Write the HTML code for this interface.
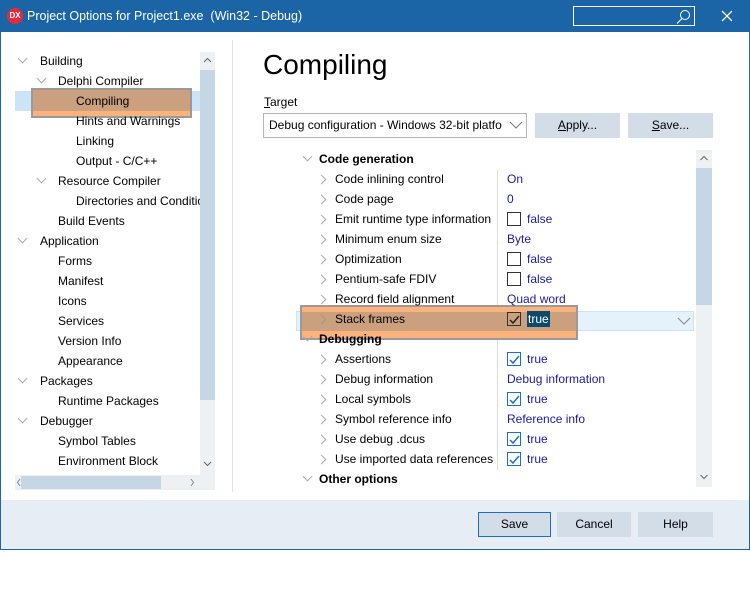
<!DOCTYPE html>
<html><head><style>
*{margin:0;padding:0;box-sizing:border-box}
body{width:750px;height:550px;position:relative;overflow:hidden;font-family:"Liberation Sans",sans-serif;font-size:12px;color:#000;background:#fff}
.a{position:absolute;white-space:nowrap}
.t{position:absolute;white-space:nowrap;line-height:20px;height:20px;top:1px}
.v{color:#1a1aa0}
.cb{position:absolute;width:14px;height:14px;border:1px solid #333;background:#fff}
.cb.on{border-color:#1a6fc9}
.btn{position:absolute;background:#d3dde8;text-align:center;line-height:25px;height:25px}
.d,.r{position:absolute;width:7px;height:7px;border-right:1px solid #aaa;border-bottom:1px solid #aaa}
.d{transform:rotate(45deg)}
.r{transform:rotate(-45deg)}
</style></head><body>
<div class="a" style="left:0;top:0;width:750px;height:32px;background:#1b64a5"></div>
<div class="a" style="left:7px;top:8px;width:16px;height:16px;border-radius:50%;background:#e52b3b;color:#fff;font-size:8px;font-weight:bold;line-height:16px;text-align:center">DX</div>
<div class="a" style="left:27px;top:9px;color:#fff;font-size:12.5px">Project Options for Project1.exe &nbsp;(Win32 - Debug)</div>
<div class="a" style="left:573px;top:6px;width:122px;height:20px;border:1px solid #fff"></div>
<svg class="a" style="left:676px;top:9px" width="16" height="16"><circle cx="9" cy="6" r="4.5" fill="none" stroke="#fff"/><line x1="6" y1="9.5" x2="1" y2="14.5" stroke="#fff"/></svg>
<svg class="a" style="left:721px;top:10px" width="12" height="12"><path d="M1 1L11 11M11 1L1 11" stroke="#fff" stroke-width="1.3"/></svg>
<div class="a" style="left:0;top:32px;width:1px;height:518px;background:#1b64a5"></div>
<div class="a" style="left:749px;top:32px;width:1px;height:518px;background:#1b64a5"></div>
<div class="a" style="left:0;top:549px;width:750px;height:1px;background:#1b64a5"></div>
<div class="a" style="left:1px;top:500px;width:748px;height:49px;background:#e6edf4"></div>
<div class="a" style="left:232px;top:40px;width:1px;height:452px;background:#e3e3e3"></div>
<!-- tree -->
<div class="a" style="left:15px;top:91px;width:185px;height:20px;background:#cce4f7"></div>
<div class="a" style="left:31px;top:88px;width:161px;height:30px;background:#fcb27c;border:2px solid #9a9a9a"></div>
<div class="a" style="left:33px;top:90px;width:157px;height:21px;background:#caa07e"></div>
<div class="a" style="left:200px;top:52px;width:15px;height:423px;background:#eef1f4"></div>
<div class="a" style="left:200px;top:70px;width:15px;height:330px;background:#c5d6e5"></div>
<div class="a" style="left:15px;top:475px;width:200px;height:15px;background:#eef1f4"></div>
<div class="a" style="left:21px;top:476px;width:140px;height:13px;background:#c5d6e5"></div>
<svg class="a" style="left:200px;top:52px" width="15" height="423"><g fill="none" stroke="#666"><path d="M4 10l3.5-3.5 3.5 3.5"/><path d="M4 410l3.5 3.5 3.5-3.5"/></g></svg>
<svg class="a" style="left:15px;top:475px" width="200" height="15"><g fill="none" stroke="#888"><path d="M5 4l-2.5 3.5 2.5 3.5"/><path d="M176 4l2.5 3.5-2.5 3.5"/></g></svg>
<div style="position:absolute;left:0;top:51px">
<div class="d" style="left:19px;top:4px"></div><div class="t" style="left:40px;top:0">Building</div>
<div class="d" style="left:38px;top:24px"></div><div class="t" style="left:58px;top:20px">Delphi Compiler</div>
<div class="t" style="left:76px;top:40px">Compiling</div>
<div class="t" style="left:76px;top:60px">Hints and Warnings</div>
<div class="t" style="left:76px;top:80px">Linking</div>
<div class="t" style="left:76px;top:100px">Output - C/C++</div>
<div class="d" style="left:38px;top:124px"></div><div class="t" style="left:58px;top:120px">Resource Compiler</div>
<div class="t" style="left:76px;top:140px;width:124px;overflow:hidden">Directories and Conditionals</div>
<div class="t" style="left:58px;top:160px">Build Events</div>
<div class="d" style="left:19px;top:184px"></div><div class="t" style="left:40px;top:180px">Application</div>
<div class="t" style="left:58px;top:200px">Forms</div>
<div class="t" style="left:58px;top:220px">Manifest</div>
<div class="t" style="left:58px;top:240px">Icons</div>
<div class="t" style="left:58px;top:260px">Services</div>
<div class="t" style="left:58px;top:280px">Version Info</div>
<div class="t" style="left:58px;top:300px">Appearance</div>
<div class="d" style="left:19px;top:324px"></div><div class="t" style="left:40px;top:320px">Packages</div>
<div class="t" style="left:58px;top:340px">Runtime Packages</div>
<div class="d" style="left:19px;top:364px"></div><div class="t" style="left:40px;top:360px">Debugger</div>
<div class="t" style="left:58px;top:380px">Symbol Tables</div>
<div class="t" style="left:58px;top:400px">Environment Block</div>
</div>
<!-- right -->
<div class="a" style="left:263px;top:49px;font-size:28px">Compiling</div>
<div class="a" style="left:264px;top:95px"><u>T</u>arget</div>
<div class="a" style="left:263px;top:113px;width:264px;height:25px;border:1px solid #b5b5b5;line-height:23px;padding-left:5px;overflow:hidden">Debug configuration - Windows 32-bit platfo</div>
<svg class="a" style="left:509px;top:120px" width="14" height="10"><path d="M1 2l6 6 6-6" fill="none" stroke="#777"/></svg>
<div class="btn" style="left:535px;top:113px;width:85px"><u>A</u>pply...</div>
<div class="btn" style="left:628px;top:113px;width:85px"><u>S</u>ave...</div>
<div class="a" style="left:696px;top:150px;width:16px;height:337px;background:#eef1f4"></div>
<div class="a" style="left:696px;top:168px;width:16px;height:137px;background:#c5d6e5"></div>
<svg class="a" style="left:696px;top:150px" width="16" height="337"><g fill="none" stroke="#666"><path d="M4.5 10l3.5-3.5 3.5 3.5"/><path d="M4.5 325l3.5 3.5 3.5-3.5"/></g></svg>
<div class="a" style="left:497px;top:170px;width:1px;height:300px;background:#ddd"></div>
<div class="a" style="left:296px;top:311px;width:398px;height:20px;background:#e5f1fb;border:1px solid #cce4f7"></div>
<div class="a" style="left:300px;top:305px;width:278px;height:35px;background:#fcb27c;border:2px solid #9a9a9a"></div>
<div class="a" style="left:302px;top:312px;width:274px;height:19px;background:#caa07e"></div>
<svg class="a" style="left:677px;top:316px" width="14" height="10"><path d="M1 2l6 6 6-6" fill="none" stroke="#888"/></svg>
<div style="position:absolute;left:0;top:149px">
<div class="d" style="left:304px;top:4px"></div><div class="t" style="left:319px;top:0;font-weight:bold">Code generation</div>
<div class="r" style="left:318px;top:27px"></div><div class="t" style="left:335px;top:20px">Code inlining control</div><div class="t v" style="left:507px;top:20px">On</div>
<div class="r" style="left:318px;top:47px"></div><div class="t" style="left:335px;top:40px">Code page</div><div class="t v" style="left:507px;top:40px">0</div>
<div class="r" style="left:318px;top:67px"></div><div class="t" style="left:335px;top:60px">Emit runtime type information</div><div class="cb" style="left:507px;top:63px"></div><div class="t v" style="left:527px;top:60px">false</div>
<div class="r" style="left:318px;top:87px"></div><div class="t" style="left:335px;top:80px">Minimum enum size</div><div class="t v" style="left:507px;top:80px">Byte</div>
<div class="r" style="left:318px;top:107px"></div><div class="t" style="left:335px;top:100px">Optimization</div><div class="cb" style="left:507px;top:103px"></div><div class="t v" style="left:527px;top:100px">false</div>
<div class="r" style="left:318px;top:127px"></div><div class="t" style="left:335px;top:120px">Pentium-safe FDIV</div><div class="cb" style="left:507px;top:123px"></div><div class="t v" style="left:527px;top:120px">false</div>
<div class="r" style="left:318px;top:147px"></div><div class="t" style="left:335px;top:140px">Record field alignment</div><div class="t v" style="left:507px;top:140px">Quad word</div>
<div class="r" style="left:318px;top:167px;border-color:#999"></div><div class="t" style="left:335px;top:160px">Stack frames</div><div class="cb" style="left:507px;top:163px;background:transparent"></div><div class="t" style="left:527px;top:162px;height:16px;line-height:16px;background:#0a4a6a;color:#fff;padding:0 1px">true</div>
<div class="d" style="left:304px;top:184px"></div><div class="t" style="left:319px;top:180px;font-weight:bold">Debugging</div>
<div class="r" style="left:318px;top:207px"></div><div class="t" style="left:335px;top:200px">Assertions</div><div class="cb on" style="left:507px;top:203px"></div><div class="t v" style="left:527px;top:200px">true</div>
<div class="r" style="left:318px;top:227px"></div><div class="t" style="left:335px;top:220px">Debug information</div><div class="t v" style="left:507px;top:220px">Debug information</div>
<div class="r" style="left:318px;top:247px"></div><div class="t" style="left:335px;top:240px">Local symbols</div><div class="cb on" style="left:507px;top:243px"></div><div class="t v" style="left:527px;top:240px">true</div>
<div class="r" style="left:318px;top:267px"></div><div class="t" style="left:335px;top:260px">Symbol reference info</div><div class="t v" style="left:507px;top:260px">Reference info</div>
<div class="r" style="left:318px;top:287px"></div><div class="t" style="left:335px;top:280px">Use debug .dcus</div><div class="cb on" style="left:507px;top:283px"></div><div class="t v" style="left:527px;top:280px">true</div>
<div class="r" style="left:318px;top:307px"></div><div class="t" style="left:335px;top:300px">Use imported data references</div><div class="cb on" style="left:507px;top:303px"></div><div class="t v" style="left:527px;top:300px">true</div>
<div class="d" style="left:304px;top:324px"></div><div class="t" style="left:319px;top:320px;font-weight:bold">Other options</div>
</div>
<svg class="a" style="left:507px;top:312px" width="16" height="280"><g fill="none" stroke-width="1.5"><path d="M3 8l3 3 6-7" stroke="#222"/><path d="M3 48l3 3 6-7" stroke="#1a6fc9"/><path d="M3 88l3 3 6-7" stroke="#1a6fc9"/><path d="M3 128l3 3 6-7" stroke="#1a6fc9"/><path d="M3 148l3 3 6-7" stroke="#1a6fc9"/></g></svg>
<div class="btn" style="left:478px;top:512px;width:73px;border:1px solid #1a6fc9;line-height:23px">Save</div>
<div class="btn" style="left:557px;top:512px;width:74px">Cancel</div>
<div class="btn" style="left:638px;top:512px;width:75px">Help</div>
</body></html>
